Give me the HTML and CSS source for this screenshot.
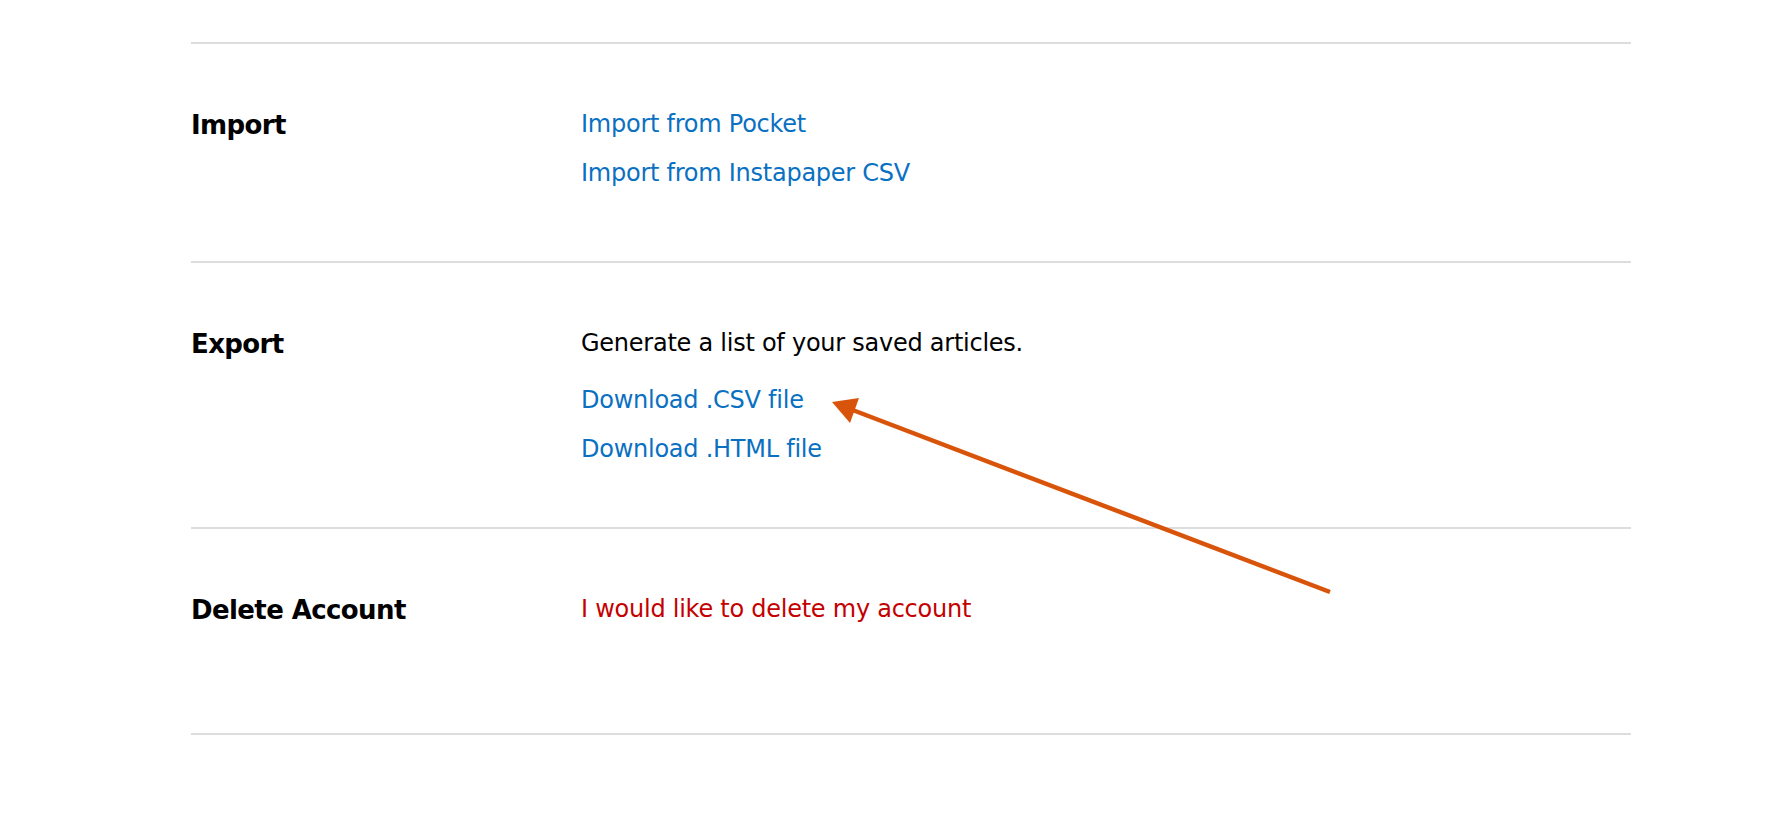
FILE: index.html
```html
<!DOCTYPE html>
<html lang="en">
<head>
<meta charset="utf-8">
<title>Account settings</title>
<link rel="stylesheet" href="styles.css">
</head>
<body>
<main class="settings">
  <section class="row row--import">
    <h2 class="row-title">Import</h2>
    <div class="row-body">
      <a class="link" href="#">Import from Pocket</a>
      <a class="link" href="#">Import from Instapaper CSV</a>
    </div>
  </section>
  <section class="row row--export">
    <h2 class="row-title">Export</h2>
    <div class="row-body">
      <p class="row-text">Generate a list of your saved articles.</p>
      <a class="link" href="#">Download .CSV file</a>
      <a class="link" href="#">Download .HTML file</a>
    </div>
  </section>
  <section class="row row--delete">
    <h2 class="row-title">Delete Account</h2>
    <div class="row-body">
      <a class="link link--danger" href="#">I would like to delete my account</a>
    </div>
  </section>
</main>
<svg class="annotation" width="1770" height="818" viewBox="0 0 1770 818" aria-hidden="true">
  <line x1="1330" y1="592" x2="850" y2="409" stroke="#d9540b" stroke-width="4.5" stroke-linecap="butt"/>
  <polygon points="832,402 859,398 850,423" fill="#d9540b"/>
</svg>
</body>
</html>
```
FILE: styles.css
```css
html, body {
  margin: 0;
  padding: 0;
  background: #ffffff;
}

body {
  position: relative;
  width: 1770px;
  height: 818px;
  overflow: hidden;
  font-family: "DejaVu Sans", "Liberation Sans", sans-serif;
  color: #000000;
}

.settings {
  width: 1440px;
  margin: 42px 0 0 191px;
  border-bottom: 2px solid #dddddd;
}

.row {
  display: flex;
  border-top: 2px solid #dddddd;
  padding-top: 56px;
}

.row--import { padding-bottom: 63px; }
.row--export { padding-bottom: 53px; }
.row--delete { padding-bottom: 98px; }

.row-title {
  flex: 0 0 390px;
  margin: 0;
  padding-top: 1px;
  font-size: 26px;
  font-weight: bold;
  line-height: 49px;
  letter-spacing: -0.6px;
}

.row-body {
  display: flex;
  flex-direction: column;
  align-items: flex-start;
  font-size: 24px;
  line-height: 49px;
  letter-spacing: -0.25px;
}

.row-text {
  margin: 0 0 8px;
}

.link {
  color: #0a70c2;
  text-decoration: none;
}

.link--danger {
  color: #c40000;
}

.annotation {
  position: absolute;
  top: 0;
  left: 0;
  pointer-events: none;
}
```
